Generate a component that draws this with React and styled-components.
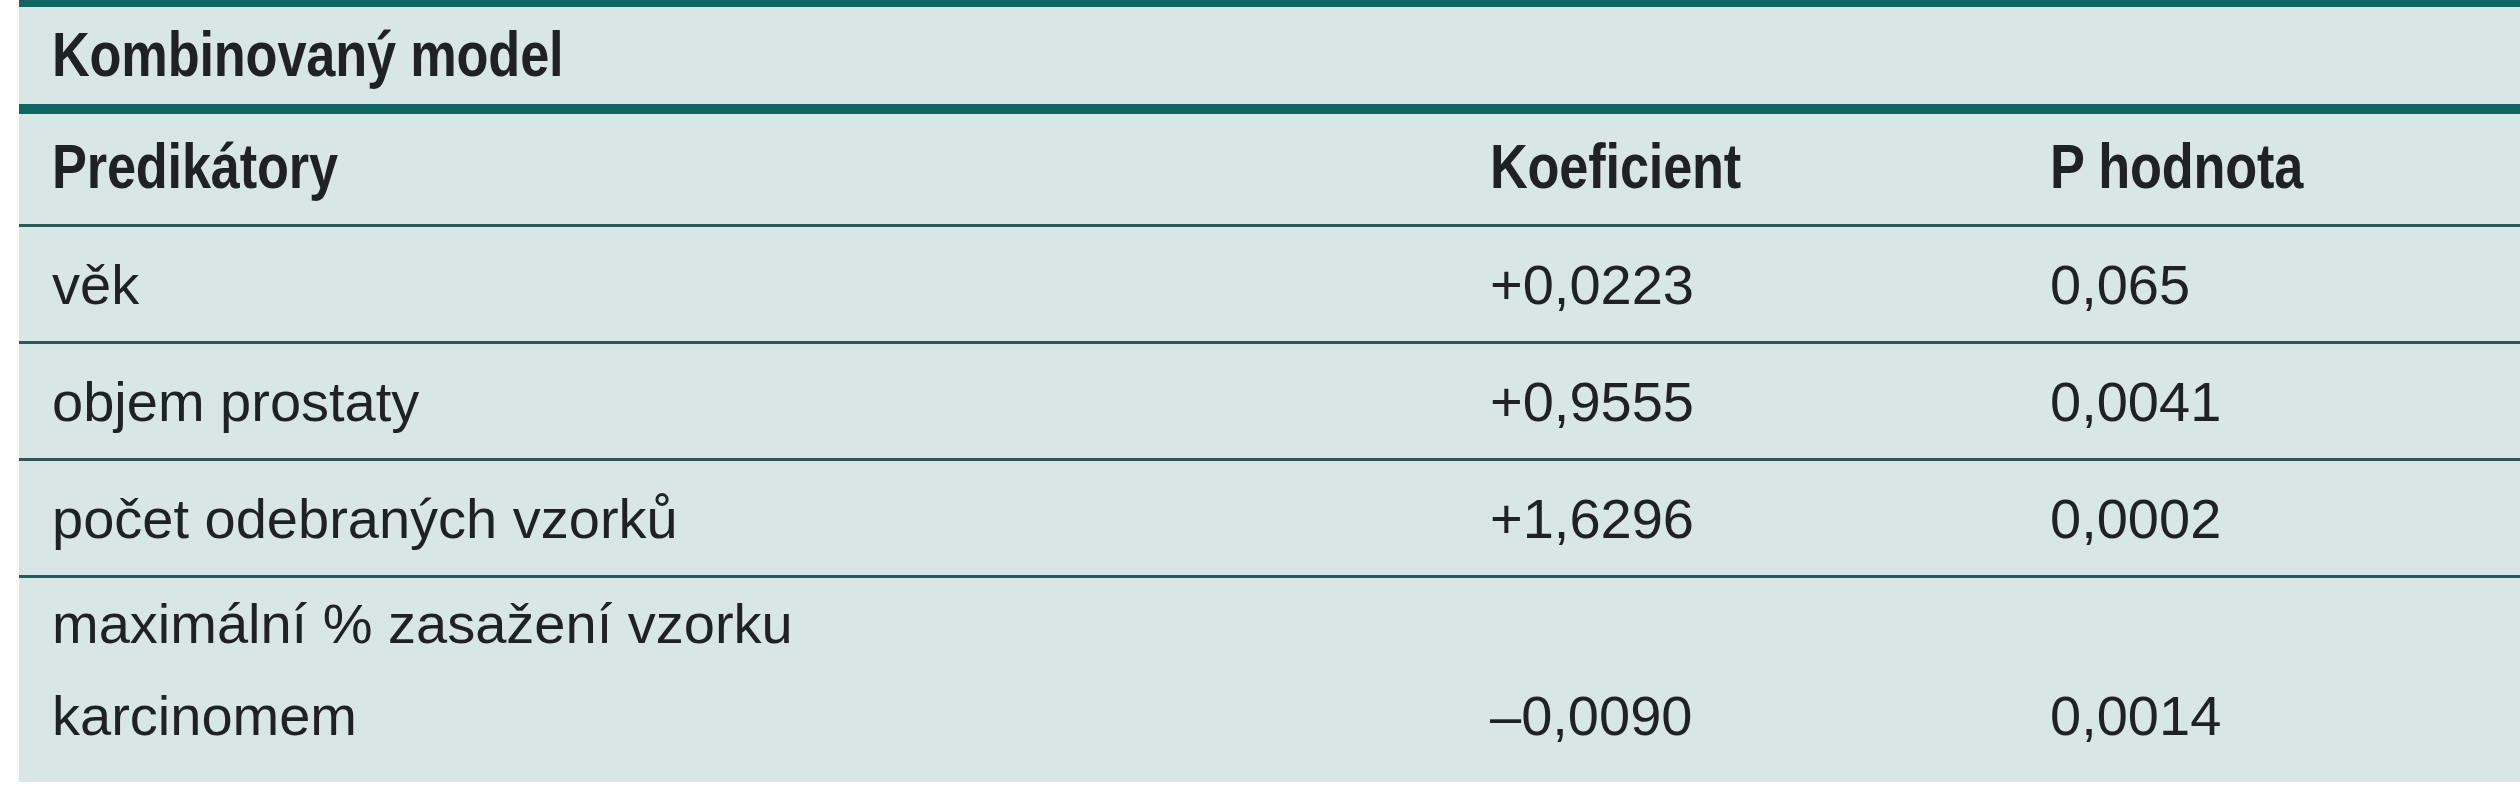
import React from 'react';
import styled, { createGlobalStyle } from 'styled-components';

const GlobalStyle = createGlobalStyle`
  html, body {
    margin: 0;
    padding: 0;
    background: #ffffff;
  }
`;

const colors = {
  bg: '#d9e6e6',
  thick: '#0f6464',
  thin: '#2a5b5c',
  text: '#1f2222',
};

const Wrapper = styled.section`
  margin-left: 19px;
  background: ${colors.bg};
`;

const Table = styled.table`
  width: 100%;
  table-layout: fixed;
  border-collapse: separate;
  border-spacing: 0;
  border-top: 7px solid ${colors.thick};
  color: ${colors.text};
`;

const HeadCell = styled.th`
  font-family: "Liberation Sans", Arial, sans-serif;
  font-weight: 700;
  font-size: 63px;
  line-height: 1.2;
  text-align: left;
  padding: ${({ $title }) => ($title ? '10px 33px 11px' : '15px 33px 20px')};
  border-bottom: ${({ $title }) =>
    $title ? `10px solid ${colors.thick}` : `3px solid ${colors.thin}`};
  white-space: nowrap;
`;

// the print face is a narrow grotesque; squeeze the regular one to match
const Narrow = styled.span`
  display: inline-block;
  transform: scaleX(0.83);
  transform-origin: left center;
  letter-spacing: -0.2px;
`;

const Cell = styled.td`
  font-family: "Liberation Sans", Arial, sans-serif;
  font-size: 56px;
  line-height: ${({ $tall }) => ($tall ? '92px' : '67px')};
  padding: ${({ $tall }) => ($tall ? '0 33px 20px' : '24px 33px 23px')};
  vertical-align: bottom;
  border-bottom: ${({ $last }) => ($last ? 'none' : `3px solid ${colors.thin}`)};
  white-space: nowrap;
`;

const rows = [
  { label: ['věk'], coef: '+0,0223', p: '0,065' },
  { label: ['objem prostaty'], coef: '+0,9555', p: '0,0041' },
  { label: ['počet odebraných vzorků'], coef: '+1,6296', p: '0,0002' },
  { label: ['maximální % zasažení vzorku', 'karcinomem'], coef: '–0,0090', p: '0,0014' },
];

const Label = ({ lines }) =>
  lines.map((line, i) => (
    <React.Fragment key={i}>
      {i > 0 && <br />}
      {line}
    </React.Fragment>
  ));

const App = () => {
  return (
    <>
      <GlobalStyle />
      <Wrapper>
        <Table>
          <colgroup>
            <col style={{ width: '1438px' }} />
            <col style={{ width: '560px' }} />
            <col />
          </colgroup>
          <thead>
            <tr>
              <HeadCell $title colSpan={3}>
                <Narrow>Kombinovaný model</Narrow>
              </HeadCell>
            </tr>
            <tr>
              <HeadCell><Narrow>Predikátory</Narrow></HeadCell>
              <HeadCell><Narrow>Koeficient</Narrow></HeadCell>
              <HeadCell><Narrow>P hodnota</Narrow></HeadCell>
            </tr>
          </thead>
          <tbody>
            {rows.map((row, i) => {
              const last = i === rows.length - 1;
              const tall = row.label.length > 1;
              return (
                <tr key={i}>
                  <Cell $last={last} $tall={tall}>
                    <Label lines={row.label} />
                  </Cell>
                  <Cell $last={last} $tall={tall}>{row.coef}</Cell>
                  <Cell $last={last} $tall={tall}>{row.p}</Cell>
                </tr>
              );
            })}
          </tbody>
        </Table>
      </Wrapper>
    </>
  );
};

export default App;
